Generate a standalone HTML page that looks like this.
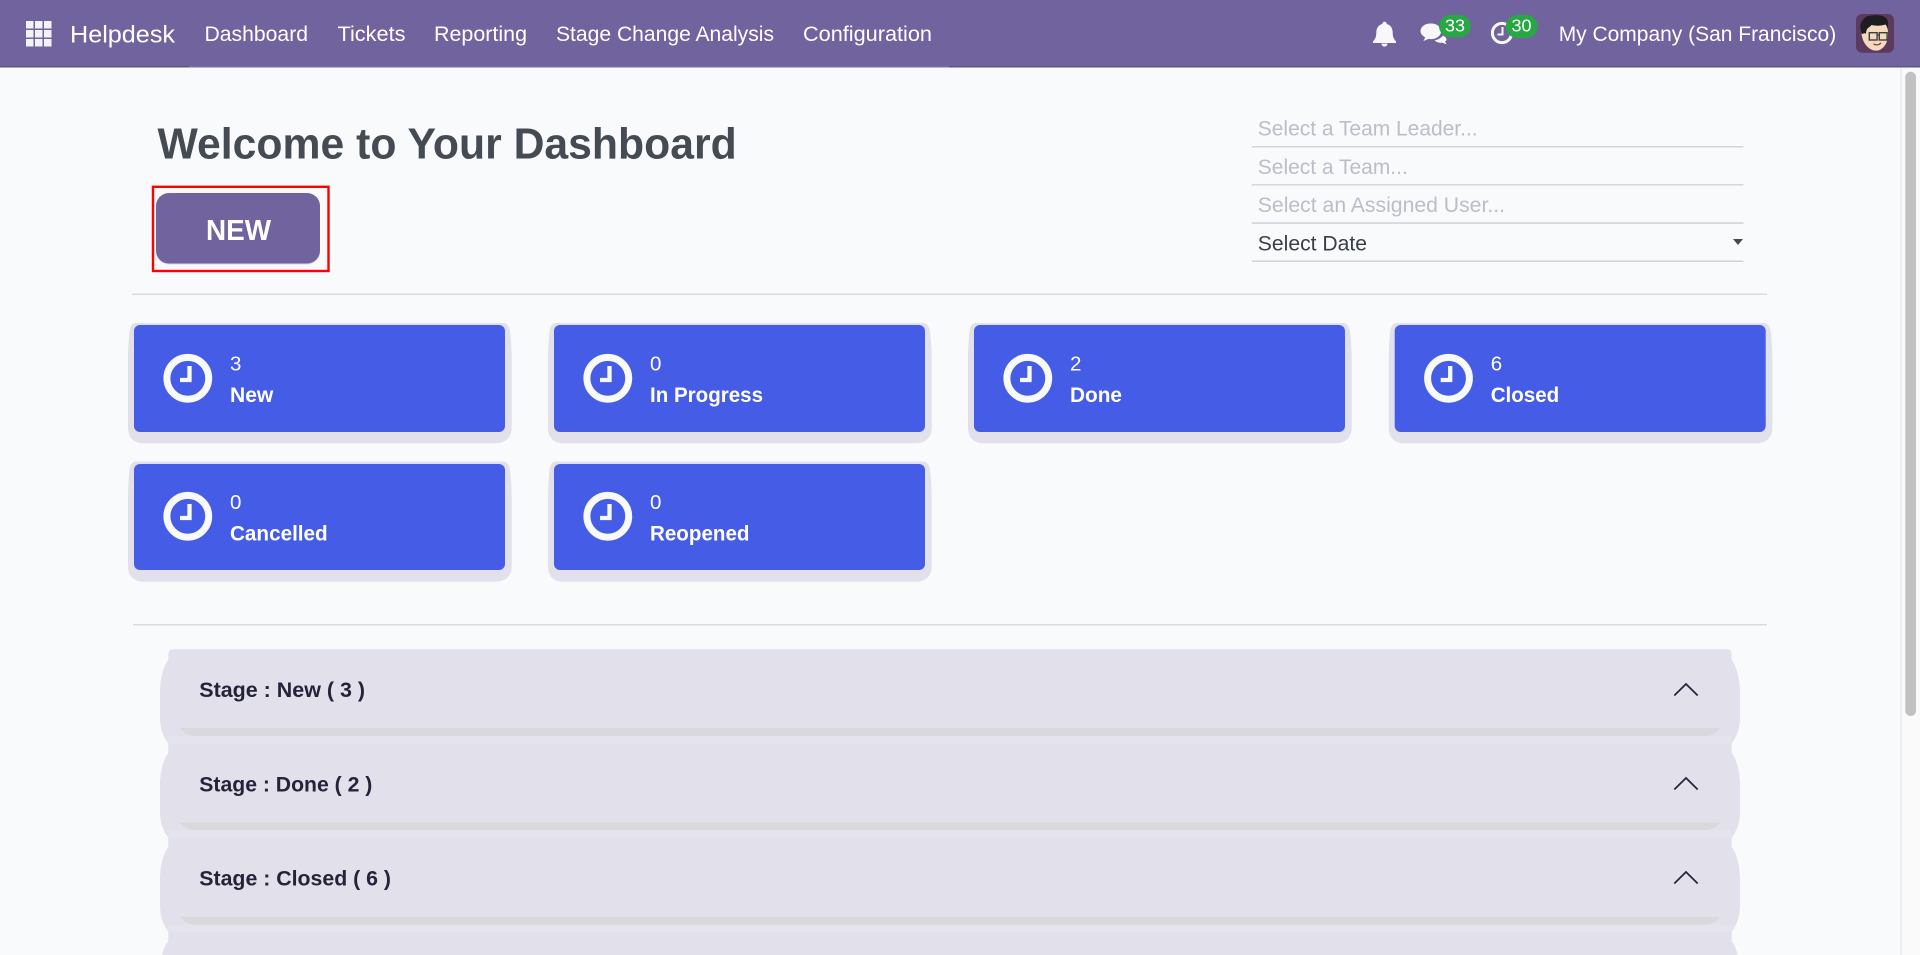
<!DOCTYPE html>
<html lang="en">
<head>
<meta charset="utf-8">
<title>Helpdesk Dashboard</title>
<style>
html,body{margin:0;padding:0;width:1920px;height:955px;overflow:hidden;background:#f9fafc}
svg{display:block;position:absolute;left:0;top:0}
text{font-family:"Liberation Sans",Arial,sans-serif}
.nav{font-size:21px;fill:#fff}
.ph{font-size:21px;fill:#bcbdc6}
.num{font-size:20.5px;fill:#fff}
.lab{font-size:21px;font-weight:700;fill:#fff}
.st{font-size:21px;font-weight:700;fill:#25233a}
.bd{font-size:17.5px;fill:#fff}
</style>
</head>
<body>
<svg width="1920" height="955" viewBox="0 0 1920 955" xmlns="http://www.w3.org/2000/svg">
<rect width="1920" height="955" fill="#f9fafc"/>

<!-- Navbar -->
<rect width="1920" height="67" fill="#71639e"/>
<rect y="66" width="189" height="1.500" fill="#5f5488"/>
<rect x="189" y="66" width="760" height="1.500" fill="#7a6da8"/>
<rect x="949" y="66" width="971" height="1.500" fill="#5f5488"/>
<g fill="#f3f2f8">
<rect x="26" y="21" width="7.500" height="7.500"/><rect x="35" y="21" width="7.500" height="7.500"/><rect x="44" y="21" width="7.500" height="7.500"/>
<rect x="26" y="30" width="7.500" height="7.500"/><rect x="35" y="30" width="7.500" height="7.500"/><rect x="44" y="30" width="7.500" height="7.500"/>
<rect x="26" y="39" width="7.500" height="7.500"/><rect x="35" y="39" width="7.500" height="7.500"/><rect x="44" y="39" width="7.500" height="7.500"/>
</g>
<text x="70" y="42.500" font-size="24.500" fill="#fff" textLength="105" lengthAdjust="spacingAndGlyphs">Helpdesk</text>
<text class="nav" x="204.500" y="41" textLength="103.500" lengthAdjust="spacingAndGlyphs">Dashboard</text>
<text class="nav" x="337.500" y="41" textLength="68" lengthAdjust="spacingAndGlyphs">Tickets</text>
<text class="nav" x="434" y="41" textLength="93" lengthAdjust="spacingAndGlyphs">Reporting</text>
<text class="nav" x="556" y="41" textLength="218" lengthAdjust="spacingAndGlyphs">Stage Change Analysis</text>
<text class="nav" x="803" y="41" textLength="129" lengthAdjust="spacingAndGlyphs">Configuration</text>

<!-- Bell -->
<path d="M1384.500 21.700a2.200 2.200 0 0 1 2.200 2.300c4.300 1 6 4.600 6 9c0 4.200 1.400 6.300 3.300 8.400v1.600h-23v-1.600c1.900-2.100 3.300-4.200 3.300-8.400c0-4.400 1.700-8 6-9a2.200 2.200 0 0 1 2.200-2.300z" fill="#f8f8fb"/>
<path d="M1381.500 43.600a3 3 0 0 0 6 0z" fill="#f8f8fb"/>

<!-- Chat -->
<path d="M1431.300 23.500c5.400 0 9.800 3.400 9.800 7.800s-4.400 7.800-9.800 7.800c-1 0-2-.1-3-.4c-1.300 1-3 1.700-5 2c1-1.100 1.600-2.300 1.800-3.500c-2.800-1.400-4.600-3.500-4.600-5.900c0-4.400 4.400-7.800 9.800-7.800z" fill="#f8f8fb"/>
<path d="M1434.500 40.400c3.600-.6 6.600-2.300 8.200-4.600c2.300.7 3.800 2 3.800 3.400c0 1-.6 1.800-1.500 2.400l1.700 2.600l-4.500-1.500c-3 .4-5.800-.4-7.700-2.300z" fill="#f8f8fb"/>
<rect x="1439" y="15" width="31.700" height="22.300" rx="11.100" fill="#28a745"/>
<text class="bd" x="1445" y="31.700" textLength="20" lengthAdjust="spacingAndGlyphs">33</text>

<!-- Activity clock -->
<circle cx="1502" cy="33" r="9.600" fill="none" stroke="#f8f8fb" stroke-width="3"/>
<path d="M1502.500 27v7.500h-5" fill="none" stroke="#f8f8fb" stroke-width="2"/>
<rect x="1505.700" y="15" width="32" height="23" rx="11.500" fill="#28a745"/>
<text class="bd" x="1511.500" y="31.700" textLength="20" lengthAdjust="spacingAndGlyphs">30</text>

<text class="nav" x="1558.700" y="41" textLength="277.500" lengthAdjust="spacingAndGlyphs">My Company (San Francisco)</text>

<!-- Avatar -->
<rect x="1856" y="14" width="38" height="38.700" rx="6" fill="#5c3a5e"/>
<path d="M1861.500 30c-.5 8 3 15 8 18.500c3 2.300 8 3 11 1c4.500-2.500 7.500-8 7.500-15c0-6-1-10-3-12h-20z" fill="#f6d9bd"/>
<path d="M1862 34c-2.500-6-2-11 .5-13.500c1.500-3 5-5 9-5c6-1 12 0 14.500 2.500c2.500 2 2.500 6 1.500 11c-.5-2-1-3.500-2-4.500c-4 1.500-10 1.500-14 .5c-1 1.500-3 2.500-4 3.500c-1 1.500-1.500 3-1.500 5.500c-.5-1-2-1-3.500 0z" fill="#1e1d22"/>
<rect x="1869.300" y="32.700" width="7.800" height="7.300" fill="none" stroke="#3d3d40" stroke-width="1.400"/>
<rect x="1879.300" y="32.700" width="7.800" height="7.300" fill="none" stroke="#3d3d40" stroke-width="1.400"/>
<path d="M1877 35h2.300" stroke="#3d3d40" stroke-width="1.300"/>
<path d="M1873.500 44c2.500 1.300 5.500 1 7.500-1" fill="none" stroke="#7a4a3a" stroke-width="1.300"/>

<!-- Scrollbar -->
<rect x="1900.500" y="67.500" width="1" height="888" fill="#e2e2ea"/>
<rect x="1901.500" y="67.500" width="18.500" height="888" fill="#fafafa"/>
<rect x="1905.300" y="71.700" width="10.700" height="644.300" rx="5.300" fill="#c1c1c1"/>

<!-- Header -->
<text x="157.500" y="158.700" font-size="43.500" font-weight="700" fill="#454b52" textLength="579.200" lengthAdjust="spacingAndGlyphs">Welcome to Your Dashboard</text>
<rect x="153" y="186.800" width="175.500" height="84.200" fill="none" stroke="#f00" stroke-width="2.400"/>
<rect x="156" y="194.500" width="164" height="70" rx="13" fill="#d8d6e6"/>
<rect x="156" y="193" width="164" height="70.500" rx="13" fill="#71639e"/>
<text x="206" y="240" font-size="29" font-weight="700" fill="#fff" textLength="65" lengthAdjust="spacingAndGlyphs">NEW</text>

<!-- Filters -->
<text class="ph" x="1257.800" y="135.700" textLength="219.800" lengthAdjust="spacingAndGlyphs">Select a Team Leader...</text>
<rect x="1251.700" y="146" width="491.800" height="1.500" fill="#d5d5da"/>
<text class="ph" x="1257.800" y="174" textLength="150" lengthAdjust="spacingAndGlyphs">Select a Team...</text>
<rect x="1251.700" y="184" width="491.800" height="1.500" fill="#d5d5da"/>
<text class="ph" x="1257.800" y="212" textLength="247.200" lengthAdjust="spacingAndGlyphs">Select an Assigned User...</text>
<rect x="1251.700" y="222.300" width="491.800" height="1.500" fill="#cfcfd5"/>
<text x="1257.800" y="250.300" font-size="21" fill="#3a3f46" textLength="109.200" lengthAdjust="spacingAndGlyphs">Select Date</text>
<rect x="1251.700" y="260.600" width="491.800" height="1.200" fill="#c8c9ce"/>
<path d="M1733 239h10l-5 6z" fill="#454b52"/>

<rect x="132" y="293.500" width="1635" height="1.500" fill="#dcdce0"/>

<!-- Cards -->
<g fill="#e2e1eb">
<path d="M136 323H503C507 323 509 326 510 331C511 340 511.700 350 511.700 360V428C511.700 438 505 443.300 495 443.300H144C134 443.300 128 438 128 428V360C128 350 128.500 340 129.500 331C130.500 326 132 323 136 323Z"/>
<path transform="translate(420,0)" d="M136 323H503C507 323 509 326 510 331C511 340 511.700 350 511.700 360V428C511.700 438 505 443.300 495 443.300H144C134 443.300 128 438 128 428V360C128 350 128.500 340 129.500 331C130.500 326 132 323 136 323Z"/>
<path transform="translate(840,0)" d="M136 323H503C507 323 509 326 510 331C511 340 511.700 350 511.700 360V428C511.700 438 505 443.300 495 443.300H144C134 443.300 128 438 128 428V360C128 350 128.500 340 129.500 331C130.500 326 132 323 136 323Z"/>
<path transform="translate(1260.700,0)" d="M136 323H503C507 323 509 326 510 331C511 340 511.700 350 511.700 360V428C511.700 438 505 443.300 495 443.300H144C134 443.300 128 438 128 428V360C128 350 128.500 340 129.500 331C130.500 326 132 323 136 323Z"/>
<path transform="translate(0,138.500)" d="M136 323H503C507 323 509 326 510 331C511 340 511.700 350 511.700 360V428C511.700 438 505 443.300 495 443.300H144C134 443.300 128 438 128 428V360C128 350 128.500 340 129.500 331C130.500 326 132 323 136 323Z"/>
<path transform="translate(420,138.500)" d="M136 323H503C507 323 509 326 510 331C511 340 511.700 350 511.700 360V428C511.700 438 505 443.300 495 443.300H144C134 443.300 128 438 128 428V360C128 350 128.500 340 129.500 331C130.500 326 132 323 136 323Z"/>
</g>
<g fill="#445ce6">
<rect x="134" y="325" width="371" height="107" rx="6"/>
<rect x="554" y="325" width="371" height="107" rx="6"/>
<rect x="974" y="325" width="371" height="107" rx="6"/>
<rect x="1394.700" y="325" width="371" height="107" rx="6"/>
<rect x="134" y="464" width="371" height="106" rx="6"/>
<rect x="554" y="464" width="371" height="106" rx="6"/>
</g>
<g fill="none" stroke="#f8f9fb">
<g><circle cx="187.800" cy="378.300" r="20.900" stroke-width="7"/><path d="M189.500 366v14h-9.500" stroke-width="4.300"/></g>
<g transform="translate(420,0)"><circle cx="187.800" cy="378.300" r="20.900" stroke-width="7"/><path d="M189.500 366v14h-9.500" stroke-width="4.300"/></g>
<g transform="translate(840,0)"><circle cx="187.800" cy="378.300" r="20.900" stroke-width="7"/><path d="M189.500 366v14h-9.500" stroke-width="4.300"/></g>
<g transform="translate(1260.700,0)"><circle cx="187.800" cy="378.300" r="20.900" stroke-width="7"/><path d="M189.500 366v14h-9.500" stroke-width="4.300"/></g>
<g transform="translate(0,138)"><circle cx="187.800" cy="378.300" r="20.900" stroke-width="7"/><path d="M189.500 366v14h-9.500" stroke-width="4.300"/></g>
<g transform="translate(420,138)"><circle cx="187.800" cy="378.300" r="20.900" stroke-width="7"/><path d="M189.500 366v14h-9.500" stroke-width="4.300"/></g>
</g>
<text class="num" x="230" y="370.700">3</text>
<text class="lab" x="230" y="402" textLength="43.300" lengthAdjust="spacingAndGlyphs">New</text>
<text class="num" x="650" y="370.700">0</text>
<text class="lab" x="650" y="402" textLength="113" lengthAdjust="spacingAndGlyphs">In Progress</text>
<text class="num" x="1070" y="370.700">2</text>
<text class="lab" x="1070" y="402" textLength="52" lengthAdjust="spacingAndGlyphs">Done</text>
<text class="num" x="1490.700" y="370.700">6</text>
<text class="lab" x="1490.700" y="402" textLength="68.500" lengthAdjust="spacingAndGlyphs">Closed</text>
<text class="num" x="230" y="509">0</text>
<text class="lab" x="230" y="540.700" textLength="97.700" lengthAdjust="spacingAndGlyphs">Cancelled</text>
<text class="num" x="650" y="509">0</text>
<text class="lab" x="650" y="540.700" textLength="99.500" lengthAdjust="spacingAndGlyphs">Reopened</text>

<rect x="133" y="624" width="1634" height="1.500" fill="#dcdce0"/>

<!-- Accordion -->
<g>
<path fill="#e2e1eb" d="M173.300 649.300H1726.700q5 0 5 5V660C1737 667 1740 679 1740 693V717C1740 729 1737 736 1731.700 743.500V744H168.300V743.500C163 736 160 729 160 717V693C160 679 163 667 168.300 660V654.300q0-5 5-5z"/>
<path d="M180 728h1540c-3 5-9 8-16 8h-1508c-7 0-13-3-16-8z" fill="#d9d9dd"/>
<rect x="168.300" y="736" width="1563.400" height="7.500" fill="#e4e4ec"/>

<path fill="#e2e1eb" d="M168.300 743.500H1731.700V753C1737 760 1740 772 1740 786V811C1740 823 1737 830 1731.700 838H168.300C163 830 160 823 160 811V786C160 772 163 760 168.300 753z"/>
<path d="M180 822.500h1540c-3 5-9 7.500-16 7.500h-1508c-7 0-13-2.500-16-7.500z" fill="#d9d9dd"/>
<rect x="168.300" y="830" width="1563.400" height="8" fill="#e4e4ec"/>

<path fill="#e2e1eb" d="M168.300 837.800H1731.700V847C1737 854 1740 866 1740 880V905C1740 917 1737 924 1731.700 932H168.300C163 924 160 917 160 905V880C160 866 163 854 168.300 847z"/>
<path d="M180 916.700h1540c-3 5-9 8-16 8h-1508c-7 0-13-3-16-8z" fill="#d9d9dd"/>
<rect x="168.300" y="925" width="1563.400" height="7" fill="#e4e4ec"/>

<path fill="#e2e1eb" d="M168.300 932H1731.700V941C1737 948 1740 960 1740 974H160C160 960 163 948 168.300 941z"/>
</g>
<text class="st" x="199.300" y="697" textLength="165.700" lengthAdjust="spacingAndGlyphs">Stage : New ( 3 )</text>
<text class="st" x="199.300" y="791.300" textLength="173" lengthAdjust="spacingAndGlyphs">Stage : Done ( 2 )</text>
<text class="st" x="199.300" y="885.300" textLength="191.700" lengthAdjust="spacingAndGlyphs">Stage : Closed ( 6 )</text>
<g fill="none" stroke="#25233a" stroke-width="1.700">
<path d="M1674.300 695.500L1686 684l11.700 11.500"/>
<path d="M1674.300 789.500L1686 778l11.700 11.500"/>
<path d="M1674.300 883.500L1686 872l11.700 11.500"/>
</g>
</svg>
</body>
</html>
